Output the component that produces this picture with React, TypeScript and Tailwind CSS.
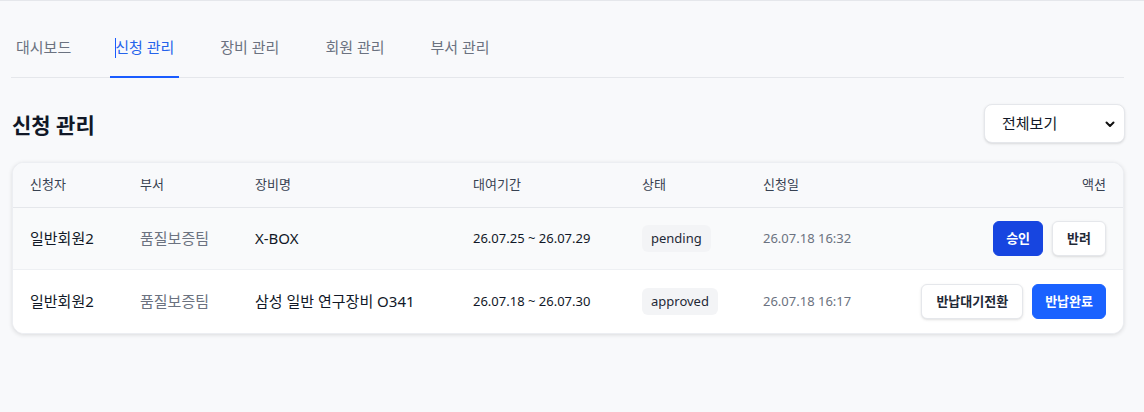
import React from "react";

const font = { fontFamily: '"Noto Sans", "Noto Sans CJK KR", sans-serif' };

const tabs = ["대시보드", "신청 관리", "장비 관리", "회원 관리", "부서 관리"];

type Row = {
  name: string;
  dept: string;
  item: string;
  period: string;
  status: string;
  date: string;
  actions: { label: string; kind: "dark" | "blue" | "white" }[];
  bg: string;
};

const rows: Row[] = [
  {
    name: "일반회원2",
    dept: "품질보증팀",
    item: "X-BOX",
    period: "26.07.25 ~ 26.07.29",
    status: "pending",
    date: "26.07.18 16:32",
    actions: [
      { label: "승인", kind: "dark" },
      { label: "반려", kind: "white" },
    ],
    bg: "bg-[#f9fafb]",
  },
  {
    name: "일반회원2",
    dept: "품질보증팀",
    item: "삼성 일반 연구장비 O341",
    period: "26.07.18 ~ 26.07.30",
    status: "approved",
    date: "26.07.18 16:17",
    actions: [
      { label: "반납대기전환", kind: "white" },
      { label: "반납완료", kind: "blue" },
    ],
    bg: "bg-white",
  },
];

const grid = "grid grid-cols-[110px_115px_218px_169px_121px_1fr_220px] items-center whitespace-nowrap";

function Btn({ label, kind }: { label: string; kind: "dark" | "blue" | "white" }) {
  const cls =
    kind === "dark"
      ? "bg-[#1745e0] text-white border border-[#1745e0] px-3"
      : kind === "blue"
      ? "bg-[#1a62ff] text-white border border-[#1a62ff] px-3"
      : "bg-white text-[#1f2937] border border-[#e5e7eb] shadow-sm px-[14px]";
  return (
    <button className={`${cls} h-[35px] rounded-md text-[13px] font-bold leading-[19px]`}>
      {label}
    </button>
  );
}

export default function App() {
  return (
    <div className="min-h-[412px] bg-[#f8f9fb] border-t border-[#e5e7eb] pl-3 pr-5" style={font}>
      <nav className="flex border-b border-[#e5e7eb] pt-[23px] -ml-px">
        {tabs.map((t, i) => (
          <div
            key={t}
            className={`relative px-[5px] pt-[12px] pb-[18px] -mb-px text-[15px] leading-[22px] border-b-2 ${
              i === 1 ? "border-[#1a5cff] text-[#2563eb]" : "border-transparent text-[#6b7280]"
            } ${i === 0 ? "mr-[34px]" : "mr-[36px]"}`}
          >
            {i === 1 && (
              <span className="absolute left-[5px] top-[14px] w-px h-[20px] bg-[#1a5cff]" />
            )}
            {t}
          </div>
        ))}
      </nav>

      <div className="flex items-center justify-between mt-[26px]">
        <h1 className="text-[21px] font-bold text-[#111827] leading-[28px] pt-[3px]">신청 관리</h1>
        <div className="w-[141px] h-[39px] bg-white rounded-lg border border-[#e5e7eb] shadow-sm flex items-center justify-between pl-[17px] pr-[8px] -mr-px">
          <span className="text-[15px] text-[#111827]">전체보기</span>
          <svg width="12" height="12" viewBox="0 0 12 12" fill="none">
            <path d="M2.5 4.5 L6 8 L9.5 4.5" stroke="#111" strokeWidth="2" strokeLinecap="round" strokeLinejoin="round" />
          </svg>
        </div>
      </div>

      <div className="mt-[19px] bg-white rounded-xl shadow-[0_1px_4px_rgba(0,0,0,0.12)] border border-[#eceef2] overflow-hidden">
        <div className={`${grid} h-[45px] bg-[#f8f9fb] border-b border-[#e5e7eb] text-[13px] text-[#374151] pl-[17px] pr-[17px]`}>
          <div>신청자</div>
          <div>부서</div>
          <div>장비명</div>
          <div>대여기간</div>
          <div>상태</div>
          <div>신청일</div>
          <div className="text-right">액션</div>
        </div>
        {rows.map((r, idx) => (
          <div
            key={idx}
            className={`${grid} ${r.bg} ${idx === 0 ? "h-[62px] border-b border-[#eef0f3]" : "h-[63px]"} pl-[17px] pr-[17px]`}
          >
            <div className="text-[15px] text-[#111827]">{r.name}</div>
            <div className="text-[15px] text-[#6b7280]">{r.dept}</div>
            <div className="text-[15px] text-[#111827]">{r.item}</div>
            <div className="text-[13px] text-[#111827]">{r.period}</div>
            <div>
              <span className="inline-block bg-[#f3f4f6] rounded-md px-[9px] py-1 text-[13px] leading-[19px] text-[#1f2937]">
                {r.status}
              </span>
            </div>
            <div className="text-[13px] text-[#6b7280]">{r.date}</div>
            <div className="flex justify-end gap-[9px]">
              {r.actions.map((a) => (
                <Btn key={a.label} label={a.label} kind={a.kind} />
              ))}
            </div>
          </div>
        ))}
      </div>
    </div>
  );
}
